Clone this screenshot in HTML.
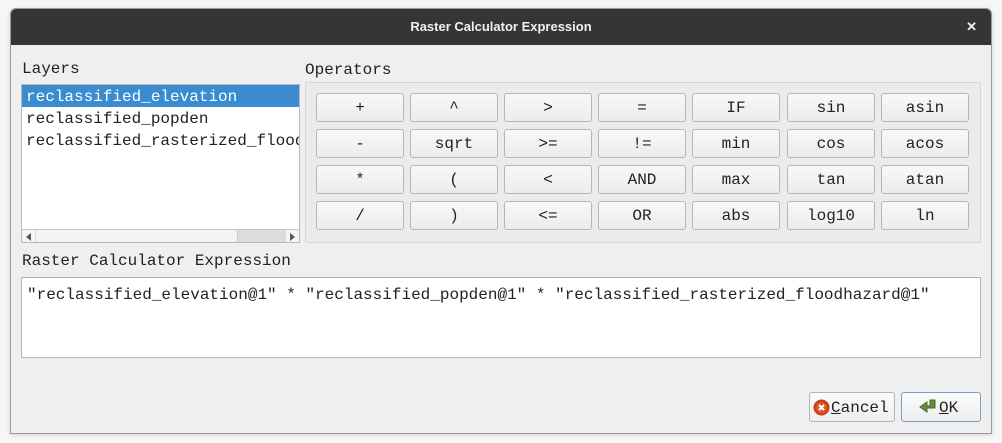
<!DOCTYPE html>
<html><head><meta charset="utf-8"><style>
*{box-sizing:border-box;margin:0;padding:0}
body{width:1002px;height:443px;background:#f6f6f6;position:relative;overflow:hidden;font-family:"Liberation Mono",monospace;font-size:16px;color:#222}
.win{position:absolute;left:10px;top:8px;width:982px;height:426px;background:#efefef;border:1px solid #9a9a9a;border-radius:6px 6px 0 0;overflow:hidden;box-shadow:0 1px 4px rgba(0,0,0,.15)}
.title{position:absolute;left:0;top:0;width:100%;height:36px;background:#353535;color:#f0f0f0;font-family:"Liberation Sans",sans-serif;font-weight:bold;font-size:13px;text-align:center;line-height:36px}
.x{position:absolute;right:14px;top:0;color:#eee;font-size:13px;font-weight:bold;line-height:36px}
.a{position:absolute}
.lbl{position:absolute;line-height:18px}
.list{position:absolute;left:21px;top:84px;width:279px;height:159px;background:#fff;border:1px solid #b8b8b8;overflow:hidden}
.row{height:22px;line-height:24px;padding-left:4px;white-space:nowrap}
.sel{background:#3a8cd0;color:#fff}
.grp{position:absolute;left:305px;top:82px;width:676px;height:161px;border:1px solid #d6d6d6;background:#ebebeb;border-radius:2px}
.b{position:absolute;width:88px;height:29px;background:linear-gradient(#f8f8f8,#ececec);border:1px solid #b6b6b6;border-radius:3px;text-align:center;line-height:29px}
.expr{position:absolute;left:21px;top:277px;width:960px;height:81px;background:#fff;border:1px solid #b4b4b4;padding:8px 5px;white-space:nowrap}
.btn{position:absolute;height:30px;border:1px solid #b4b4b4;border-radius:3px;background:linear-gradient(#fbfbfb,#eeeeee);line-height:30px}
u{text-decoration:underline}
</style></head><body>
<div class="win">
<div class="title">Raster Calculator Expression<span class="x">✕</span></div>
</div>
<div class="lbl" style="left:22px;top:60px">Layers</div>
<div class="lbl" style="left:305px;top:61px">Operators</div>
<div class="list">
<div class="row sel">reclassified_elevation</div>
<div class="row">reclassified_popden</div>
<div class="row">reclassified_rasterized_floodhazard</div>
<div class="a" style="left:0;top:144px;width:277px;height:14px;border-top:1px solid #c8c8c8;background:#f4f4f4">
<div class="a" style="left:13px;top:0;width:1px;height:13px;background:#ddd"></div>
<div class="a" style="left:4px;top:3px;width:0;height:0;border:4px solid transparent;border-right:5px solid #555;border-left:0"></div>
<div class="a" style="left:215px;top:0;width:49px;height:13px;background:#dcdcdc;border-left:1px solid #ccc"></div>
<div class="a" style="left:268px;top:3px;width:0;height:0;border:4px solid transparent;border-left:5px solid #555;border-right:0"></div>
</div>
</div>
<div class="grp"></div>
<div class="b" style="left:316px;top:93px">+</div>
<div class="b" style="left:410px;top:93px">^</div>
<div class="b" style="left:504px;top:93px">&gt;</div>
<div class="b" style="left:598px;top:93px">=</div>
<div class="b" style="left:692px;top:93px">IF</div>
<div class="b" style="left:787px;top:93px">sin</div>
<div class="b" style="left:881px;top:93px">asin</div>
<div class="b" style="left:316px;top:129px">-</div>
<div class="b" style="left:410px;top:129px">sqrt</div>
<div class="b" style="left:504px;top:129px">&gt;=</div>
<div class="b" style="left:598px;top:129px">!=</div>
<div class="b" style="left:692px;top:129px">min</div>
<div class="b" style="left:787px;top:129px">cos</div>
<div class="b" style="left:881px;top:129px">acos</div>
<div class="b" style="left:316px;top:165px">*</div>
<div class="b" style="left:410px;top:165px">(</div>
<div class="b" style="left:504px;top:165px">&lt;</div>
<div class="b" style="left:598px;top:165px">AND</div>
<div class="b" style="left:692px;top:165px">max</div>
<div class="b" style="left:787px;top:165px">tan</div>
<div class="b" style="left:881px;top:165px">atan</div>
<div class="b" style="left:316px;top:201px">/</div>
<div class="b" style="left:410px;top:201px">)</div>
<div class="b" style="left:504px;top:201px">&lt;=</div>
<div class="b" style="left:598px;top:201px">OR</div>
<div class="b" style="left:692px;top:201px">abs</div>
<div class="b" style="left:787px;top:201px">log10</div>
<div class="b" style="left:881px;top:201px">ln</div>
<div class="lbl" style="left:22px;top:252px">Raster Calculator Expression</div>
<div class="expr">"reclassified_elevation@1" * "reclassified_popden@1" * "reclassified_rasterized_floodhazard@1"</div>
<div class="btn" style="left:809px;top:392px;width:86px;padding-left:3px">
<svg width="17" height="17" viewBox="0 0 17 17" style="position:absolute;left:3px;top:6px"><circle cx="8.5" cy="8.5" r="8" fill="#c9401c"/><circle cx="8.5" cy="8.5" r="5.5" fill="#e2562c"/><path d="M6 6l5 5M11 6l-5 5" stroke="#fff" stroke-width="2"/></svg>
<span style="position:absolute;left:21px;top:0"><u>C</u>ancel</span></div>
<div class="btn" style="left:901px;top:392px;width:80px;border-color:#7aa0c4">
<svg width="20" height="16" viewBox="0 0 20 16" style="position:absolute;left:16px;top:6px"><path d="M12 1h5v8h-8v4L2 8l7-5v4h3z" fill="#6a8a3a" stroke="#4a6a2a" stroke-width="1"/></svg>
<span style="position:absolute;left:37px;top:0"><u>O</u>K</span></div>
</body></html>
